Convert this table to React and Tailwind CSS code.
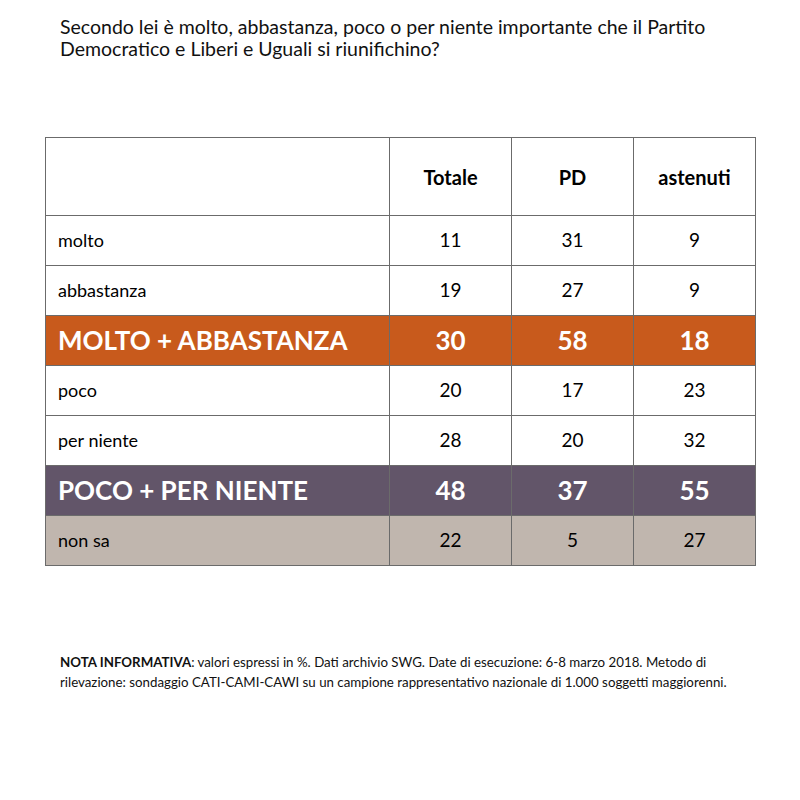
import React from "react";

const rows = [
  { label: "molto", v: ["11", "31", "9"], kind: "plain" },
  { label: "abbastanza", v: ["19", "27", "9"], kind: "plain" },
  { label: "MOLTO + ABBASTANZA", v: ["30", "58", "18"], kind: "orange" },
  { label: "poco", v: ["20", "17", "23"], kind: "plain" },
  { label: "per niente", v: ["28", "20", "32"], kind: "plain" },
  { label: "POCO + PER NIENTE", v: ["48", "37", "55"], kind: "purple" },
  { label: "non sa", v: ["22", "5", "27"], kind: "beige" },
];

const bgFor = {
  plain: "bg-white text-black",
  orange: "bg-[#c85a1c] text-white",
  purple: "bg-[#625569] text-white",
  beige: "bg-[#c0b6ae] text-black",
};

export default function App() {
  return (
    <div
      className="w-[800px] h-[800px] bg-white text-black"
      style={{ fontFamily: "Lato, 'Open Sans', sans-serif" }}
    >
      <div className="pl-[60px] pt-[16px] text-[19.5px] leading-[22px] text-[#111]">
        <p>Secondo lei è molto, abbastanza, poco o per niente importante che il Partito</p>
        <p>Democratico e Liberi e Uguali si riunifichino?</p>
      </div>

      <div className="pl-[45px] pt-[77px]">
        <table className="border-collapse border border-[#6b6b6b]">
          <thead>
            <tr className="h-[78px]">
              <th className="w-[344px] border border-[#6b6b6b]"></th>
              <th className="w-[122px] border border-[#6b6b6b] text-[20px] font-bold">Totale</th>
              <th className="w-[122px] border border-[#6b6b6b] text-[20px] font-bold">PD</th>
              <th className="w-[122px] border border-[#6b6b6b] text-[20px] font-bold">astenuti</th>
            </tr>
          </thead>
          <tbody>
            {rows.map((r) => {
              const big = r.kind === "orange" || r.kind === "purple";
              return (
                <tr key={r.label} className={`h-[50px] ${bgFor[r.kind]}`}>
                  <td
                    className={
                      big
                        ? "border border-[#6b6b6b] pl-[12px] text-[26px] font-bold"
                        : "border border-[#6b6b6b] pl-[12px] text-[18px]"
                    }
                  >
                    {r.label}
                  </td>
                  {r.v.map((x, i) => (
                    <td
                      key={i}
                      className={
                        big
                          ? "border border-[#6b6b6b] text-center text-[26px] font-bold"
                          : "border border-[#6b6b6b] text-center text-[19px]"
                      }
                    >
                      {x}
                    </td>
                  ))}
                </tr>
              );
            })}
          </tbody>
        </table>
      </div>

      <div className="pl-[60px] pt-[86px] text-[13.3px] leading-[20px] text-[#111]">
        <p>
          <span className="font-bold">NOTA INFORMATIVA</span>: valori espressi in %. Dati archivio SWG. Date di esecuzione: 6-8 marzo 2018. Metodo di
        </p>
        <p>rilevazione: sondaggio CATI-CAMI-CAWI su un campione rappresentativo nazionale di 1.000 soggetti maggiorenni.</p>
      </div>
    </div>
  );
}
